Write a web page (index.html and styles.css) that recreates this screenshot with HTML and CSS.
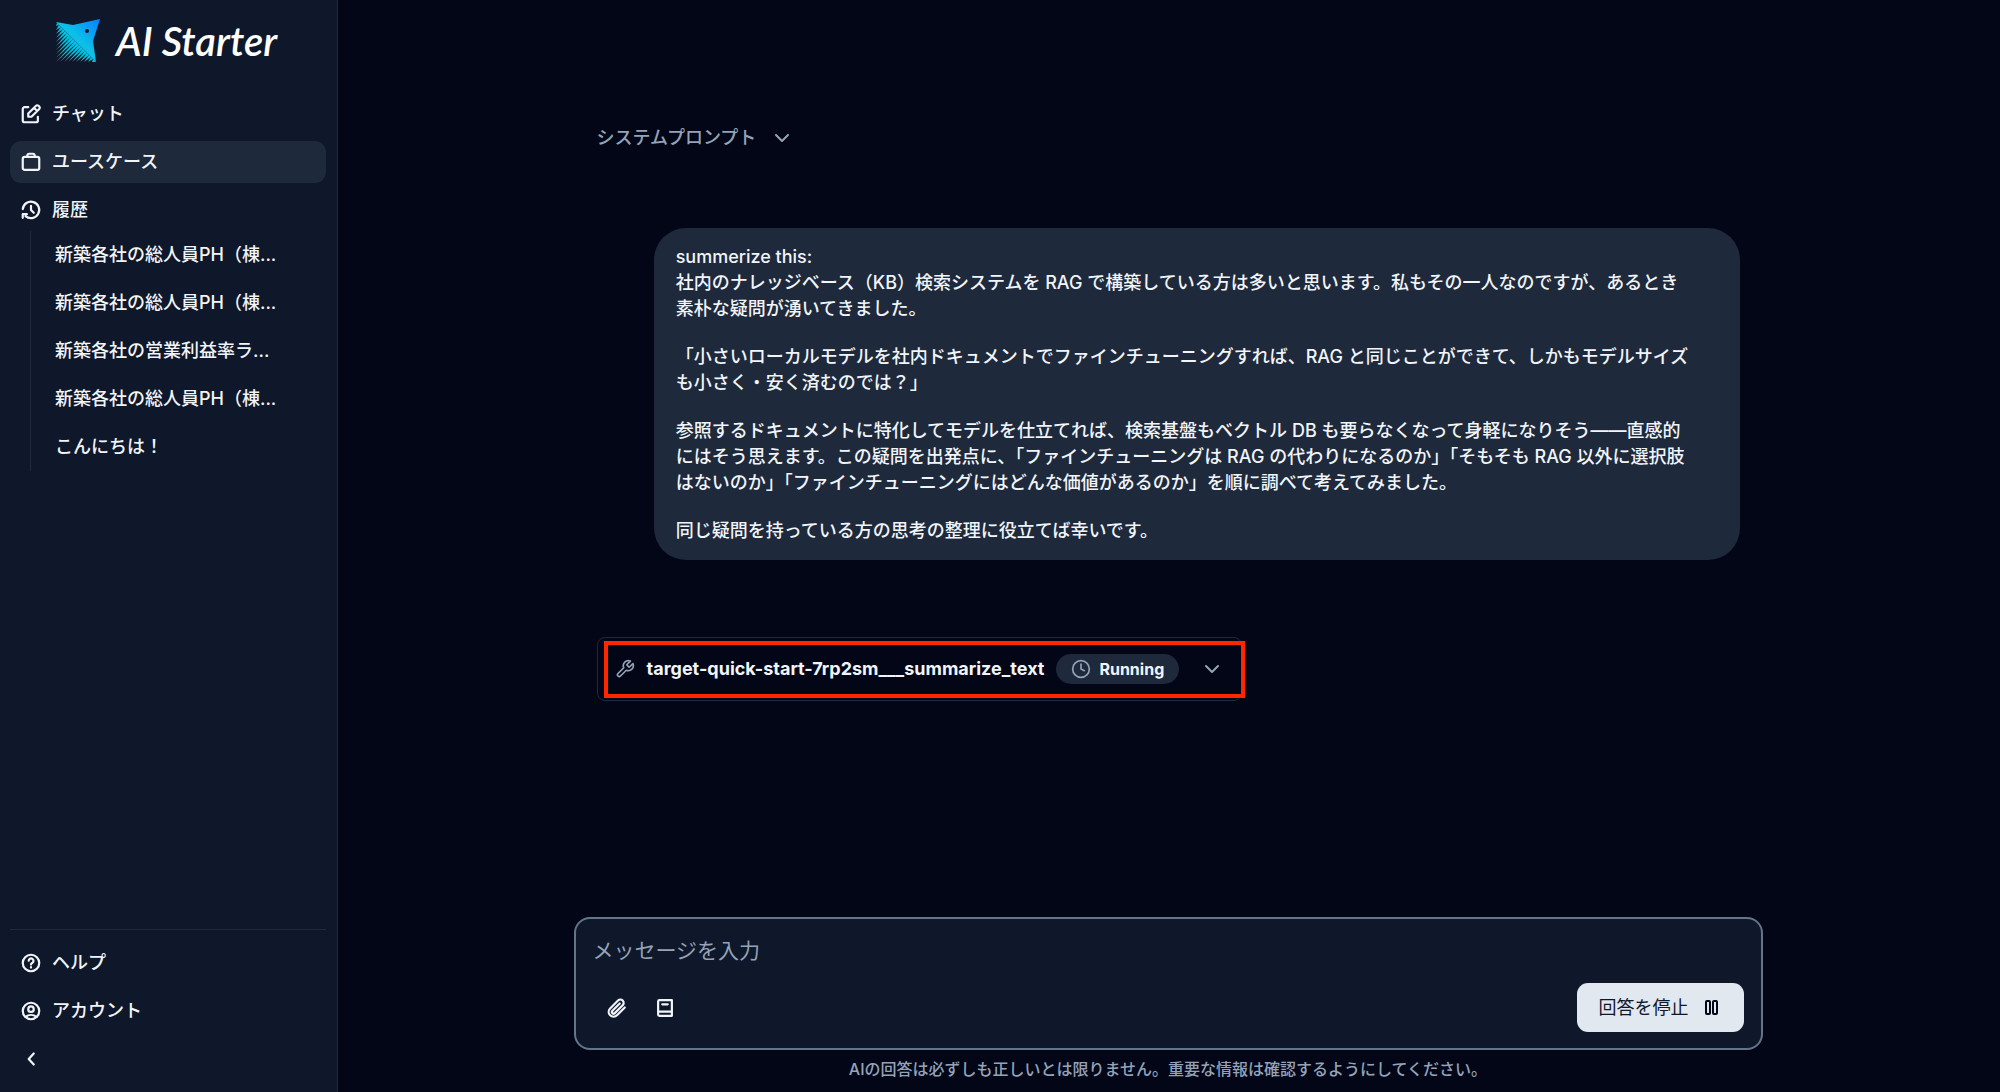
FILE: index.html
```html
<!DOCTYPE html>
<html lang="ja">
<head>
    <meta charset="UTF-8">
    <meta name="viewport" content="width=device-width, initial-scale=1.0">
    <title>AI Starter</title>
    <link rel="stylesheet" href="styles.css">
</head>
<body>
    <aside class="sidebar">
        <a class="logo" href="#">
            <svg class="logo-mark" viewBox="0 0 44 43" aria-hidden="true">
                <defs>
                    <linearGradient id="fish" gradientUnits="userSpaceOnUse" x1="6" y1="40" x2="42" y2="2">
                        <stop offset="0" stop-color="#0fb5c9"/>
                        <stop offset="0.5" stop-color="#0cc0e8"/>
                        <stop offset="1" stop-color="#0a84ff"/>
                    </linearGradient>
                </defs>
                <path fill="url(#fish)" d="M0 3 17 6 44 0 37 22 40 43z"/>
                <path fill="url(#fish)" d="M1 4 3 6 0 7zM3 6 5 8 0 11zM5 8 7 10 0 15zM7 10 9 12 0 19zM9 12 11 14 0 23zM11 14 13 16 0 27zM13 16 15 18 0 31zM15 18 17 20 0 35zM17 20 19 22 0 39zM19 22 21 24 0 43zM21 24 23 26 4 43zM23 26 25 28 8 43zM25 28 27 30 12 43zM27 30 29 32 16 43zM29 32 31 34 20 43zM31 34 33 36 24 43zM33 36 35 38 28 43zM35 38 37 40 32 43zM37 40 40 43 36 43z"/>
                <circle cx="31" cy="12" r="2" fill="#0f172a"/>
            </svg>
            <span class="logo-text">AI Starter</span>
        </a>

        <nav class="nav">
            <a class="nav-item" href="#">
                <svg class="icon" viewBox="0 0 24 24"><path d="M9 4.500H5a2 2 0 0 0-2 2V19a2 2 0 0 0 2 2h12.500a2 2 0 0 0 2-2v-4"/><path d="M9 15v-3.500L17.500 3a1.800 1.800 0 0 1 2.600 0l.9.9a1.800 1.800 0 0 1 0 2.600L12.500 15zM15.500 5.500l3 3"/></svg>
                チャット
            </a>
            <a class="nav-item active" href="#">
                <svg class="icon" viewBox="0 0 24 24"><rect x="3" y="6.500" width="18" height="14" rx="2"/><path d="M8 6.500v-1.500a2 2 0 0 1 2-2h4a2 2 0 0 1 2 2v1.500"/></svg>
                ユースケース
            </a>
            <a class="nav-item" href="#">
                <svg class="icon" viewBox="0 0 24 24"><path d="M3 11A9 9 0 1 1 6 18.700M3 20.500v-4H7.500"/><path d="M12 7.500V12l3 3"/></svg>
                履歴
            </a>
            <ul class="history">
                <li><a href="#">新築各社の総人員PH（棟...</a></li>
                <li><a href="#">新築各社の総人員PH（棟...</a></li>
                <li><a href="#">新築各社の営業利益率ラ...</a></li>
                <li><a href="#">新築各社の総人員PH（棟...</a></li>
                <li><a href="#">こんにちは！</a></li>
            </ul>
        </nav>

        <div class="sidebar-footer">
            <a class="nav-item" href="#">
                <svg class="icon" viewBox="0 0 24 24"><circle cx="12" cy="12" r="9"/><path d="M9.500 9.500a2.600 2.600 0 1 1 4.200 2.200c-1.100.7-1.700 1.200-1.700 2M12 16.500v.5"/></svg>
                ヘルプ
            </a>
            <a class="nav-item" href="#">
                <svg class="icon" viewBox="0 0 24 24"><circle cx="12" cy="12" r="9"/><circle cx="12" cy="10" r="3"/><path d="M6 18.300c3.500-2.600 8.500-2.600 12 0"/></svg>
                アカウント
            </a>
            <button class="nav-item" type="button" aria-label="サイドバーを閉じる">
                <svg class="icon" viewBox="0 0 24 24"><path d="M15 6 9.500 12l5.500 6"/></svg>
            </button>
        </div>
    </aside>

    <main class="main">
        <div class="messages">
            <button class="system-prompt" type="button">
                システムプロンプト
                <svg class="chevron" viewBox="0 0 18 18"><path d="m3 6 6 6 6-6"/></svg>
            </button>

            <div class="bubble">
                <p>summerize this:<br>
                社内のナレッジベース（KB）検索システムを RAG で構築している方は多いと思います。私もその一人なのですが、あるとき<br>
                素朴な疑問が湧いてきました。</p>
                <p>「小さいローカルモデルを社内ドキュメントでファインチューニングすれば、RAG と同じことができて、しかもモデルサイズ<br>
                も小さく・安く済むのでは？」</p>
                <p>参照するドキュメントに特化してモデルを仕立てれば、検索基盤もベクトル DB も要らなくなって身軽になりそう——直感的<br>
                にはそう思えます。この疑問を出発点に、「ファインチューニングは RAG の代わりになるのか」「そもそも RAG 以外に選択肢<br>
                はないのか」「ファインチューニングにはどんな価値があるのか」を順に調べて考えてみました。</p>
                <p>同じ疑問を持っている方の思考の整理に役立てば幸いです。</p>
            </div>

            <div class="tool">
                <button class="tool-header" type="button">
                    <svg class="wrench" viewBox="0 0 24 24"><path d="M14.700 6.300a1 1 0 0 0 0 1.400l1.600 1.600a1 1 0 0 0 1.400 0l3.770-3.770a6 6 0 0 1-7.940 7.940l-6.910 6.910a2.120 2.120 0 0 1-3-3l6.910-6.910a6 6 0 0 1 7.940-7.940z"/></svg>
                    <span class="tool-name">target-quick-start-7rp2sm___summarize_text</span>
                    <span class="status">
                        <svg class="clock" viewBox="0 0 24 24"><circle cx="12" cy="12" r="10"/><path d="M12 6v6l4 2"/></svg>
                        Running
                    </span>
                    <svg class="chevron" viewBox="0 0 18 18"><path d="m3 6 6 6 6-6"/></svg>
                </button>
                <div class="highlight"></div>
            </div>
        </div>

        <form class="composer">
            <textarea rows="1" placeholder="メッセージを入力" aria-label="メッセージを入力"></textarea>
            <div class="composer-actions">
                <button class="icon-button" type="button" aria-label="ファイルを添付">
                    <svg class="icon" viewBox="0 0 24 24"><path d="m20.500 11.500-8.500 8.500a5.300 5.300 0 0 1-7.500-7.500l8.600-8.600a3.600 3.600 0 0 1 5.100 5.100l-8.600 8.600a1.800 1.800 0 0 1-2.600-2.600l8-8"/></svg>
                </button>
                <button class="icon-button" type="button" aria-label="プロンプト集">
                    <svg class="icon" viewBox="0 0 24 24"><path d="M19.500 16V3.500H6a1.500 1.500 0 0 0-1.500 1.500v14A1.500 1.500 0 0 0 6 20.500h13.500V16H5M9 8h6"/></svg>
                </button>
                <button class="stop" type="button">
                    回答を停止
                    <svg class="pause" viewBox="0 0 18 18"><rect x="3" y="2" width="4" height="13" rx="1"/><rect x="10" y="2" width="4" height="13" rx="1"/></svg>
                </button>
            </div>
        </form>
        <p class="note">AIの回答は必ずしも正しいとは限りません。重要な情報は確認するようにしてください。</p>
    </main>
</body>
</html>
```
FILE: styles.css
```css
* {
    box-sizing: border-box;
}
body {
    display: flex;
    height: 100vh;
    margin: 0;
    background-color: #020617;
    color: #f1f5f9;
    font-family: Inter, "Noto Sans CJK JP", sans-serif;
    font-size: 18px;
    font-weight: 500;
    line-height: 26px;
}
a {
    color: inherit;
    text-decoration: none;
}
button {
    padding: 0;
    border: none;
    background: none;
    color: inherit;
    font: inherit;
    cursor: pointer;
}
svg {
    flex: none;
    fill: none;
    stroke: currentColor;
    stroke-width: 2;
    stroke-linecap: round;
    stroke-linejoin: round;
}
.icon {
    width: 22px;
    height: 22px;
    stroke-width: 2.4;
}

/* sidebar */
.sidebar {
    display: flex;
    flex: none;
    flex-direction: column;
    width: 338px;
    padding: 0 11px 12px 10px;
    border-right: 1px solid #1e293b;
    background-color: #0f172a;
}
.logo {
    display: flex;
    align-items: center;
    gap: 16px;
    height: 81px;
    margin-bottom: 12px;
    padding-left: 46px;
}
.logo-mark {
    width: 44px;
    height: 43px;
    stroke: none;
}
.logo-text {
    color: #fff;
    font-family: Lato, sans-serif;
    font-size: 40px;
    font-style: italic;
    font-weight: 600;
    line-height: 44px;
    white-space: nowrap;
}
.nav,
.sidebar-footer {
    display: flex;
    flex-direction: column;
    gap: 6px;
}
.nav {
    flex: 1;
}
.nav-item {
    display: flex;
    align-items: center;
    gap: 10px;
    height: 42px;
    padding: 0 10px;
    border-radius: 11px;
}
.nav-item.active {
    background-color: #1e293b;
}
.history {
    margin: -6px 0 0 20px;
    padding: 0 0 0 24px;
    border-left: 1px solid #1e293b;
    list-style: none;
}
.history a {
    display: block;
    line-height: 48px;
    white-space: nowrap;
}
.sidebar-footer {
    padding-top: 12px;
    border-top: 1px solid #1e293b;
}

/* chat */
.main {
    display: flex;
    flex: 1;
    flex-direction: column;
    align-items: center;
    min-width: 0;
    padding: 0 24px 11px 22px;
}
.messages {
    display: flex;
    flex: 1;
    flex-direction: column;
    align-items: flex-start;
    width: 100%;
    max-width: 1143px;
    padding-top: 125px;
}
.system-prompt {
    display: flex;
    align-items: center;
    gap: 17px;
    color: #94a3b8;
}
.chevron {
    width: 18px;
    height: 18px;
}
.bubble {
    width: 95%;
    margin: 77px 0 77px auto;
    padding: 16px 22px;
    border-radius: 32px;
    background-color: #1e293b;
}
.bubble p {
    margin: 0 0 22px;
}
.bubble p:last-child {
    margin-bottom: 0;
}
.tool {
    position: relative;
    border: 1px solid #1e293b;
    border-radius: 8px;
}
.tool-header {
    display: flex;
    align-items: center;
    gap: 12px;
    height: 62px;
    padding: 0 20px 0 17px;
    font-weight: 700;
}
.tool-header .chevron {
    margin-left: 12px;
    color: #94a3b8;
}
.wrench {
    width: 20px;
    height: 20px;
    color: #94a3b8;
}
.status {
    display: flex;
    align-items: center;
    gap: 8px;
    height: 30px;
    padding: 0 15px;
    border-radius: 15px;
    background-color: #1e293b;
    font-size: 16px;
}
.clock {
    width: 20px;
    height: 20px;
    color: #94a3b8;
}
.highlight {
    position: absolute;
    inset: 3px -4px 2px 6px;
    border: 4px solid #ff2600;
    pointer-events: none;
}

/* composer */
.composer {
    width: 100%;
    max-width: 1189px;
    padding: 15px 17px 16px;
    border: 2px solid #64748b;
    border-radius: 16px;
    background-color: #0f172a;
}
.composer textarea {
    display: block;
    width: 100%;
    height: 34px;
    margin-bottom: 15px;
    padding: 0;
    border: none;
    outline: none;
    background: none;
    color: inherit;
    font: inherit;
    font-size: 21px;
    font-weight: 400;
    line-height: 34px;
    resize: none;
}
.composer textarea::placeholder {
    color: #94a3b8;
    opacity: 1;
}
.composer-actions {
    display: flex;
    align-items: center;
}
.icon-button {
    display: flex;
    align-items: center;
    justify-content: center;
    width: 48px;
    height: 48px;
}
.stop {
    display: flex;
    align-items: center;
    gap: 14px;
    height: 49px;
    margin-left: auto;
    padding: 0 23px 0 22px;
    border-radius: 11px;
    background-color: #e2e8f0;
    color: #0f172a;
    font-weight: 400;
}
.pause {
    width: 18px;
    height: 18px;
    stroke: #020617;
}
.note {
    margin: 7px 0 0;
    color: #94a3b8;
    font-size: 16px;
    line-height: 24px;
}
```
